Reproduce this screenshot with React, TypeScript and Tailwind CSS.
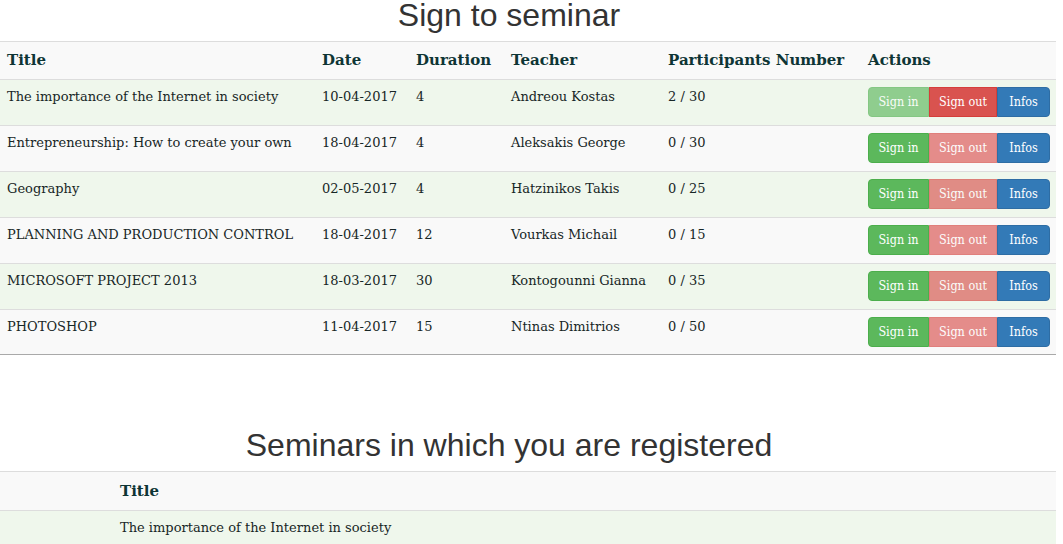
import React from "react";

type Seminar = {
	title: string;
	date: string;
	duration: string;
	teacher: string;
	participants: string;
	signedIn: boolean;
};

const SEMINARS: Seminar[] = [
	{ title: "The importance of the Internet in society", date: "10-04-2017", duration: "4", teacher: "Andreou Kostas", participants: "2 / 30", signedIn: true },
	{ title: "Entrepreneurship: How to create your own", date: "18-04-2017", duration: "4", teacher: "Aleksakis George", participants: "0 / 30", signedIn: false },
	{ title: "Geography", date: "02-05-2017", duration: "4", teacher: "Hatzinikos Takis", participants: "0 / 25", signedIn: false },
	{ title: "PLANNING AND PRODUCTION CONTROL", date: "18-04-2017", duration: "12", teacher: "Vourkas Michail", participants: "0 / 15", signedIn: false },
	{ title: "MICROSOFT PROJECT 2013", date: "18-03-2017", duration: "30", teacher: "Kontogounni Gianna", participants: "0 / 35", signedIn: false },
	{ title: "PHOTOSHOP", date: "11-04-2017", duration: "15", teacher: "Ntinas Dimitrios", participants: "0 / 50", signedIn: false },
];

const cols = "grid grid-cols-[315px_94px_95px_157px_200px_195px]";
const serif = "font-['DejaVu_Serif',serif]";

function Actions({ signedIn }: { signedIn: boolean }) {
	return (
		<div className="flex pt-[7px] font-['DejaVu_Serif_Condensed','DejaVu_Serif',serif] text-[12.5px] text-white">
			<button
				className={`h-[30px] w-[61px] rounded-l-[4px] border border-[#4cae4c] bg-[#5cb85c] ${signedIn ? "opacity-65" : ""}`}
			>
				Sign in
			</button>
			<button
				className={`h-[30px] w-[68px] border border-[#d43f3a] bg-[#d9534f] ${signedIn ? "" : "opacity-65"}`}
			>
				Sign out
			</button>
			<button className="h-[30px] w-[53px] rounded-r-[4px] border border-[#2e6da4] bg-[#337ab7]">
				Infos
			</button>
		</div>
	);
}

export default function App() {
	return (
		<div className={`w-[1056px] bg-white text-[13px] text-[#172626] ${serif}`}>
			<h2 className="pr-[38px] text-center font-['Liberation_Sans',Arial,sans-serif] text-[32px] leading-[30px] text-[#333]">
				Sign to seminar
			</h2>

			<div className="mt-[11px]">
				<div className={`${cols} h-[38px] items-center border-t border-[#ddd] bg-[#f9f9f9] font-bold text-[15px] text-[#0e3535]`}>
					<div className="pl-[7px]">Title</div>
					<div className="pl-[7px]">Date</div>
					<div className="pl-[7px]">Duration</div>
					<div className="pl-[7px]">Teacher</div>
					<div className="pl-[7px]">Participants Number</div>
					<div className="pl-[7px]">Actions</div>
				</div>
				{SEMINARS.map((s, i) => (
					<div
						key={s.title}
						className={`${cols} h-[46px] border-t border-[#ddd] leading-5 ${i % 2 === 0 ? "bg-[#eff7ec]" : "bg-[#f9f9f9]"} ${i === SEMINARS.length - 1 ? "border-b border-b-[#a9a9a9]" : ""}`}
					>
						<div className="pl-[7px] pt-[7px]">{s.title}</div>
						<div className="pl-[7px] pt-[7px]">{s.date}</div>
						<div className="pl-[7px] pt-[7px]">{s.duration}</div>
						<div className="pl-[7px] pt-[7px]">{s.teacher}</div>
						<div className="pl-[7px] pt-[7px]">{s.participants}</div>
						<div className="pl-[7px]">
							<Actions signedIn={s.signedIn} />
						</div>
					</div>
				))}
			</div>

			<h2 className="mt-[75px] pr-[38px] text-center font-['Liberation_Sans',Arial,sans-serif] text-[32px] leading-[30px] text-[#333]">
				Seminars in which you are registered
			</h2>

			<div className="mt-[11px]">
				<div className="grid h-[39px] grid-cols-[113px_1fr] items-center border-t border-[#ddd] bg-[#f9f9f9] font-bold text-[15px] text-[#0e3535]">
					<div />
					<div className="pl-[7px]">Title</div>
				</div>
				<div className="grid h-[46px] grid-cols-[113px_1fr] border-t border-[#ddd] bg-[#eff7ec] leading-5">
					<div />
					<div className="pl-[7px] pt-[7px]">The importance of the Internet in society</div>
				</div>
			</div>
		</div>
	);
}
